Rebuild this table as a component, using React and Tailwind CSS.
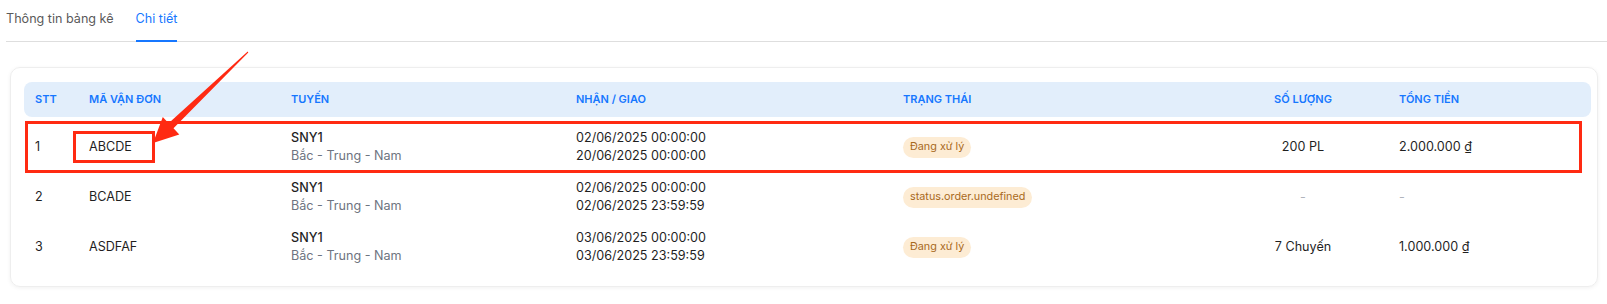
import React from "react";

const rows = [
  {
    stt: 1,
    code: "ABCDE",
    route: "SNY1",
    path: "Bắc - Trung - Nam",
    from: "02/06/2025 00:00:00",
    to: "20/06/2025 00:00:00",
    status: "Đang xử lý",
    qty: "200 PL",
    total: "2.000.000 ₫",
  },
  {
    stt: 2,
    code: "BCADE",
    route: "SNY1",
    path: "Bắc - Trung - Nam",
    from: "02/06/2025 00:00:00",
    to: "02/06/2025 23:59:59",
    status: "status.order.undefined",
    qty: null,
    total: null,
  },
  {
    stt: 3,
    code: "ASDFAF",
    route: "SNY1",
    path: "Bắc - Trung - Nam",
    from: "03/06/2025 00:00:00",
    to: "03/06/2025 23:59:59",
    status: "Đang xử lý",
    qty: "7 Chuyến",
    total: "1.000.000 ₫",
  },
];

const cols = "grid grid-cols-[54px_202px_285px_327px_326px_170px_1fr]";

const StatusBadge = ({ label }) => (
  <span className="inline-flex items-center h-[21px] px-[7px] rounded-full bg-[#fdecd4] text-[#a8691c] text-[10.8px]">
    {label}
  </span>
);

const Dash = () => <span className="text-[#b0b4bc]">-</span>;

const App = () => {
  return (
    <div className="relative w-[1607px] h-[304px] bg-white font-['Inter','Noto_Sans',sans-serif] text-[12.6px] text-[#1f1f1f]">
      {/* tabs */}
      <div className="ml-[6px] flex items-end gap-[22px] h-[42px] border-b border-[#dedede]">
        <div className="h-full flex items-center pb-[2px] text-[#5a5a5a]">Thông tin bảng kê</div>
        <div className="h-full flex items-center pb-[2px] text-[#1677ff] border-b-2 border-[#1677ff] -mb-px">
          Chi tiết
        </div>
      </div>

      {/* card */}
      <div className="mt-[25px] ml-[10px] w-[1588px] rounded-[10px] border border-[#eeeeee] shadow-[0_1px_4px_rgba(0,0,0,0.06)] pt-[14px] pb-[14px] pl-[13px] pr-[6px]">
        <div className={`${cols} h-[35px] items-center rounded-[8px] bg-[#e2eefb] text-[11px] font-semibold text-[#1677ff] uppercase`}>
          <div className="pl-[11px]">STT</div>
          <div className="pl-[11px]">Mã vận đơn</div>
          <div className="pl-[11px]">Tuyến</div>
          <div className="pl-[11px]">Nhận / Giao</div>
          <div className="pl-[11px]">Trạng thái</div>
          <div className="text-center">Số lượng</div>
          <div className="pl-[11px]">Tổng tiền</div>
        </div>

        <div className="mt-[5px]">
          {rows.map((r) => (
            <div key={r.stt} className={`${cols} h-[50px] items-center`}>
              <div className="pl-[11px]">{r.stt}</div>
              <div className="pl-[11px]">{r.code}</div>
              <div className="pl-[11px] leading-[18px]">
                <div className="font-medium">{r.route}</div>
                <div className="text-[#6e7480]">{r.path}</div>
              </div>
              <div className="pl-[11px] leading-[18px]">
                <div>{r.from}</div>
                <div>{r.to}</div>
              </div>
              <div className="pl-[11px]">
                <StatusBadge label={r.status} />
              </div>
              <div className="text-center">{r.qty ?? <Dash />}</div>
              <div className="pl-[11px]">{r.total ?? <Dash />}</div>
            </div>
          ))}
        </div>
      </div>

      {/* annotation overlay */}
      <div className="absolute left-[25px] top-[121px] w-[1557px] h-[52px] border-[3px] border-[#ff2a12] pointer-events-none" />
      <div className="absolute left-[73px] top-[131px] w-[82px] h-[32px] border-[3px] border-[#ff2a12] pointer-events-none" />
      <svg className="absolute left-0 top-0 pointer-events-none" width="1607" height="304">
        <polygon
          fill="#ff2a12"
          points="153,143 162.8,117 168.6,123.2 247.7,51.6 248.3,52.4 173.5,128.2 179.3,134.4"
        />
      </svg>
    </div>
  );
};

export default App;
